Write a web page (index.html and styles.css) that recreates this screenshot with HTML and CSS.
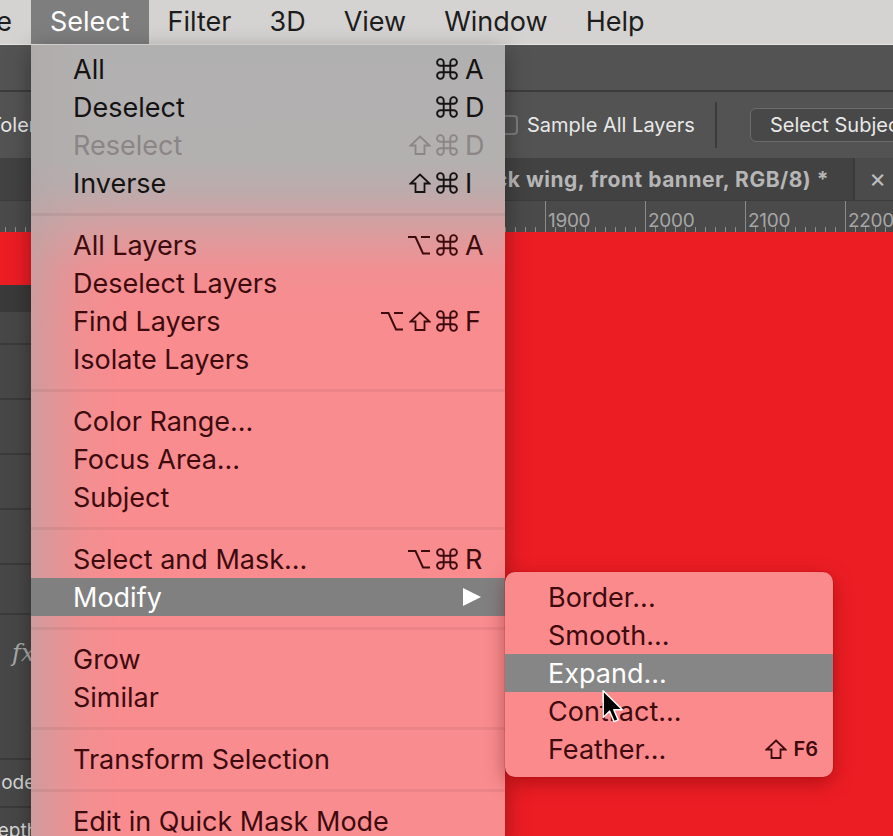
FILE: index.html
```html
<!DOCTYPE html>
<html lang="en">
  <head>
    <meta charset="UTF-8" />
    <title>Select</title>
    <link rel="stylesheet" href="styles.css">
  </head>
  <body>
    <!-- 快捷键符号 -->
    <svg class="symbols" aria-hidden="true">
      <symbol id="k-cmd" viewBox="2 2 20 20">
        <path d="M15 6v12a3 3 0 1 0 3-3H6a3 3 0 1 0 3 3V6a3 3 0 1 0-3 3h12a3 3 0 1 0-3-3" />
      </symbol>
      <symbol id="k-shift" viewBox="0 0 22 20">
        <path d="M11 1.5 20.5 10.5H15.5V19H6.5V10.5H1.5Z" />
      </symbol>
      <symbol id="k-opt" viewBox="0 0 24 20">
        <path d="M1 2H8.5L16 18.5H23M14 2H23" />
      </symbol>
    </svg>

    <header class="menubar">
      <div class="mb-cut"><span>Type</span></div>
      <div class="mb-item active">Select</div>
      <div class="mb-item">Filter</div>
      <div class="mb-item">3D</div>
      <div class="mb-item">View</div>
      <div class="mb-item">Window</div>
      <div class="mb-item">Help</div>
    </header>

    <div class="appbar"></div>

    <div class="options">
      <div class="opt-left"><span class="tolerance">Tolerance: 32</span></div>
      <span class="checkbox"></span>
      <span class="opt-label">Sample All Layers</span>
      <span class="opt-sep"></span>
      <span class="opt-button">Select Subject</span>
    </div>

    <div class="tabs">
      <div class="tab">banner_xl.psd @ 33.3% (back wing, front banner, RGB/8) *</div>
      <div class="tab-close">×</div>
    </div>

    <div class="ruler">
      <span>1400</span><span>1500</span><span>1600</span><span>1700</span><span>1800</span>
      <span>1900</span><span>2000</span><span>2100</span><span>2200</span>
    </div>

    <div class="workspace">
      <div class="panel">
        <div class="panel-head"></div>
        <div class="panel-row" style="height: 33px"></div>
        <div class="panel-row"></div>
        <div class="panel-row"></div>
        <div class="panel-row"></div>
        <div class="panel-row"></div>
        <div class="panel-row" style="height: 50px"></div>
        <div class="panel-row fx"><i>fx</i></div>
        <div class="panel-row mode"><span>Mode</span></div>
        <div class="panel-row bottom"><span>Depth</span></div>
      </div>
    </div>

    <!-- Select 菜单 -->
    <nav class="menu">
      <div class="item dark"><span class="label">All</span><span class="keys"><svg class="mod"><use href="#k-cmd" /></svg><b class="key">A</b></span></div>
      <div class="item dark"><span class="label">Deselect</span><span class="keys"><svg class="mod"><use href="#k-cmd" /></svg><b class="key">D</b></span></div>
      <div class="item disabled"><span class="label">Reselect</span><span class="keys"><svg class="mod shift"><use href="#k-shift" /></svg><svg class="mod"><use href="#k-cmd" /></svg><b class="key">D</b></span></div>
      <div class="item dark"><span class="label">Inverse</span><span class="keys"><svg class="mod shift"><use href="#k-shift" /></svg><svg class="mod"><use href="#k-cmd" /></svg><b class="key">I</b></span></div>
      <div class="sep"></div>
      <div class="item"><span class="label">All Layers</span><span class="keys"><svg class="mod opt"><use href="#k-opt" /></svg><svg class="mod"><use href="#k-cmd" /></svg><b class="key">A</b></span></div>
      <div class="item"><span class="label">Deselect Layers</span></div>
      <div class="item"><span class="label">Find Layers</span><span class="keys"><svg class="mod opt"><use href="#k-opt" /></svg><svg class="mod shift"><use href="#k-shift" /></svg><svg class="mod"><use href="#k-cmd" /></svg><b class="key">F</b></span></div>
      <div class="item"><span class="label">Isolate Layers</span></div>
      <div class="sep"></div>
      <div class="item"><span class="label">Color Range...</span></div>
      <div class="item"><span class="label">Focus Area...</span></div>
      <div class="item"><span class="label">Subject</span></div>
      <div class="sep"></div>
      <div class="item"><span class="label">Select and Mask...</span><span class="keys"><svg class="mod opt"><use href="#k-opt" /></svg><svg class="mod"><use href="#k-cmd" /></svg><b class="key">R</b></span></div>
      <div class="item active"><span class="label">Modify</span><svg class="arrow" viewBox="0 0 18 18"><path d="M0 0 18 9 0 18Z" /></svg></div>
      <div class="sep"></div>
      <div class="item"><span class="label">Grow</span></div>
      <div class="item"><span class="label">Similar</span></div>
      <div class="sep"></div>
      <div class="item"><span class="label">Transform Selection</span></div>
      <div class="sep"></div>
      <div class="item"><span class="label">Edit in Quick Mask Mode</span></div>
    </nav>

    <!-- Modify 子菜单 -->
    <nav class="submenu">
      <div class="item"><span class="label">Border...</span></div>
      <div class="item"><span class="label">Smooth...</span></div>
      <div class="item active"><span class="label">Expand...</span></div>
      <div class="item"><span class="label">Contract...</span></div>
      <div class="item"><span class="label">Feather...</span><span class="keys"><svg class="mod shift"><use href="#k-shift" /></svg><b class="fkey">F6</b></span></div>
    </nav>

    <svg class="cursor" viewBox="-1 -1 19 30">
      <path d="M0 0V23L5.5 17.6 9.4 26.6 13 25.1 9.2 16.4H16.6Z" />
    </svg>
  </body>
</html>
```

FILE: styles.css
```css
html,
body {
  margin: 0;
}
body {
  width: 893px;
  height: 836px;
  overflow: hidden;
  position: relative;
  background-color: #ed1d24;
  font-family: Inter, "Noto Sans", sans-serif;
}
.symbols {
  display: none;
}

/* 顶部菜单栏 */
.menubar {
  height: 44px;
  display: flex;
  background-color: #d5d3d1;
  border-bottom: 1px solid #e6e4e2;
  font-size: 27px;
  color: #1d1d1d;
  line-height: 44px;
  white-space: nowrap;
}
.mb-cut {
  width: 31px;
  flex: none;
  display: flex;
  justify-content: flex-end;
  overflow: hidden;
  padding-right: 19px;
  box-sizing: border-box;
}
.mb-item {
  padding: 0 19px;
}
.mb-item.active {
  background-color: #7e7e7e;
  color: #fff;
}

/* Photoshop 界面 */
.appbar {
  height: 45px;
  background-color: #535353;
  border-bottom: 2px solid #3c3c3c;
}
.options {
  height: 66px;
  display: flex;
  align-items: center;
  background-color: #535353;
  font-size: 20px;
  color: #e8e8e8;
  white-space: nowrap;
}
.options > * {
  flex: none;
}
.opt-left {
  width: 500px;
  overflow: hidden;
}
.tolerance {
  margin-left: -11px;
}
.checkbox {
  width: 14px;
  height: 16px;
  border: 2px solid #7b7b7b;
  border-radius: 4px;
}
.opt-label {
  margin-left: 9px;
}
.opt-sep {
  width: 2px;
  height: 46px;
  margin-left: 20px;
  background-color: #3b3b3b;
}
.opt-button {
  margin-left: 33px;
  height: 32px;
  line-height: 32px;
  padding: 0 40px 0 19px;
  border: 1.5px solid #6c6c6c;
  border-radius: 6px;
  background-color: #484848;
}

.tabs {
  height: 42px;
  display: flex;
  background-color: #3a3a3a;
}
.tab {
  flex: 0 0 853px;
  box-sizing: border-box;
  display: flex;
  justify-content: flex-end;
  align-items: center;
  overflow: hidden;
  padding-right: 24px;
  background-color: #424242;
  font-size: 21px;
  font-weight: 700;
  letter-spacing: 0.5px;
  color: #b6b6b6;
  white-space: nowrap;
}
.tab-close {
  flex: 1;
  margin-left: 2px;
  padding-left: 14px;
  background-color: #4b4b4b;
  color: #bdbdbd;
  font-size: 26px;
  line-height: 40px;
}

.ruler {
  height: 32px;
  box-sizing: border-box;
  display: flex;
  padding-left: 45px;
  border-top: 1px solid #3c3c3c;
  background-color: #4a4a4a;
  background-image: repeating-linear-gradient(to right, #8c8c8c 0 1px, transparent 1px 10px);
  background-size: 100% 5px;
  background-position: 5px bottom;
  background-repeat: no-repeat;
}
.ruler span {
  flex: 0 0 100px;
  box-sizing: border-box;
  border-left: 1.5px solid #8c8c8c;
  padding: 10px 0 0 2px;
  font-size: 19px;
  line-height: 20px;
  color: #a6a6a6;
  letter-spacing: -0.3px;
}

.workspace {
  height: 604px;
  display: flex;
}
.panel {
  width: 60px;
  margin-top: 53px;
  background-color: #474747;
  font-size: 19px;
  color: #d6d6d6;
  white-space: nowrap;
}
.panel-head {
  height: 27px;
  background-color: #3a3a3a;
}
.panel-row {
  height: 55px;
  box-sizing: border-box;
  border-bottom: 2px solid #3a3a3a;
  overflow: hidden;
}
.panel-row.fx {
  height: 145px;
  padding: 24px 0 0 12px;
  color: #a9a9a9;
  font-size: 24px;
  font-family: "DejaVu Serif", serif;
}
.panel-row.mode {
  height: 48px;
}
.panel-row span {
  display: block;
  margin-left: -16px;
  line-height: 46px;
}

/* 菜单 */
.menu,
.submenu {
  position: absolute;
  font-size: 27px;
  color: #3d0b0d;
  white-space: nowrap;
}
.menu {
  left: 31px;
  top: 45px;
  width: 474px;
  height: 800px;
  padding-top: 5px;
  box-sizing: border-box;
  box-shadow: 0 6px 22px rgba(0, 0, 0, 0.35);
  background:
    linear-gradient(to right, rgba(176, 168, 168, 0.58) 0, rgba(176, 168, 168, 0.32) 24px, rgba(176, 168, 168, 0.1) 52px, rgba(176, 168, 168, 0) 90px),
    linear-gradient(to bottom, #b1b0b0 0, #b3b0b0 115px, #bcabac 145px, #cfa2a3 172px, #e1999b 197px, #f09093 222px, #f68d90 250px, #f98c8f 290px);
}
.item {
  height: 38px;
  display: flex;
  align-items: center;
  padding: 0 20px 0 42px;
}
.item.dark {
  color: #141212;
}
.item.disabled {
  color: #8b8585;
}
.item.active {
  background-color: #808080;
  color: #fff;
}
.label {
  flex: auto;
}
.keys {
  display: flex;
  align-items: center;
  gap: 5px;
}
.mod {
  width: 22px;
  height: 22px;
  fill: none;
  stroke: currentColor;
  stroke-width: 1.7;
}
.mod.shift {
  height: 20px;
  stroke-width: 1.8;
}
.mod.opt {
  width: 24px;
  height: 20px;
  stroke-width: 2;
}
.key {
  width: 20px;
  margin-left: 2px;
  font-weight: 400;
}
.arrow {
  width: 18px;
  height: 18px;
  margin-right: 4px;
  fill: #fff;
}
.sep {
  height: 24px;
  display: flex;
  align-items: center;
}
.sep::before {
  content: "";
  flex: auto;
  height: 3px;
  background-color: rgba(0, 0, 0, 0.055);
}

.submenu {
  left: 505px;
  top: 572px;
  width: 328px;
  padding: 6px 0 9px;
  border-radius: 10px;
  background-color: #fb8a8d;
  box-shadow: 0 0 0 1px rgba(120, 0, 0, 0.12), 0 6px 20px rgba(90, 0, 0, 0.4);
}
.submenu .item {
  padding: 0 15px 0 43px;
}
.submenu .item.active {
  background-color: #868686;
}
.fkey {
  font-size: 20px;
  font-weight: 600;
  margin-left: 1px;
}

.cursor {
  position: absolute;
  left: 602px;
  top: 689px;
  width: 22px;
  height: 36px;
  fill: #000;
  stroke: #fff;
  stroke-width: 1.3;
  stroke-linejoin: round;
}
```
